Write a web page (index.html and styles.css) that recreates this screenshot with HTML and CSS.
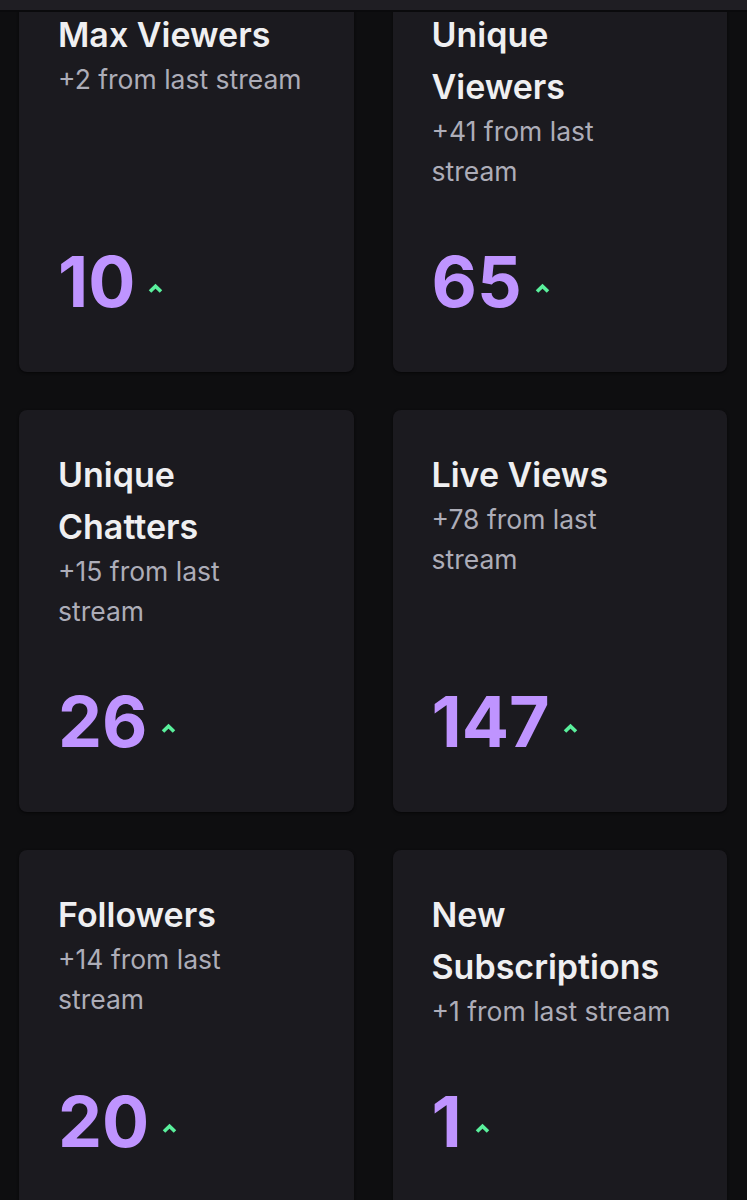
FILE: index.html
```html
<!DOCTYPE html>
<html lang="en">
<head>
    <meta charset="UTF-8">
    <meta name="viewport" content="width=device-width, initial-scale=1.0">
    <title>Stream Summary</title>
    <link rel="stylesheet" href="styles.css">
</head>
<body>
    <div id="topbar"></div>
    <div id="stats">
        <div class="card">
            <div class="title">Max Viewers</div>
            <div class="sub">+2 from last stream</div>
            <div class="value"><span>10</span><svg class="up" width="15" height="10" viewBox="0 0 15 10"><polyline points="2,8.5 7.5,3.2 13,8.5"/></svg></div>
        </div>
        <div class="card">
            <div class="title">Unique Viewers</div>
            <div class="sub">+41 from last stream</div>
            <div class="value"><span>65</span><svg class="up" width="15" height="10" viewBox="0 0 15 10"><polyline points="2,8.5 7.5,3.2 13,8.5"/></svg></div>
        </div>
        <div class="card">
            <div class="title">Unique Chatters</div>
            <div class="sub">+15 from last stream</div>
            <div class="value"><span>26</span><svg class="up" width="15" height="10" viewBox="0 0 15 10"><polyline points="2,8.5 7.5,3.2 13,8.5"/></svg></div>
        </div>
        <div class="card">
            <div class="title">Live Views</div>
            <div class="sub">+78 from last stream</div>
            <div class="value"><span>147</span><svg class="up" width="15" height="10" viewBox="0 0 15 10"><polyline points="2,8.5 7.5,3.2 13,8.5"/></svg></div>
        </div>
        <div class="card">
            <div class="title">Followers</div>
            <div class="sub">+14 from last stream</div>
            <div class="value"><span>20</span><svg class="up" width="15" height="10" viewBox="0 0 15 10"><polyline points="2,8.5 7.5,3.2 13,8.5"/></svg></div>
        </div>
        <div class="card">
            <div class="title">New Subscriptions</div>
            <div class="sub">+1 from last stream</div>
            <div class="value"><span>1</span><svg class="up" width="15" height="10" viewBox="0 0 15 10"><polyline points="2,8.5 7.5,3.2 13,8.5"/></svg></div>
        </div>
    </div>
</body>
</html>
```

FILE: styles.css
```css
body {
    font-family: Inter, "Noto Sans", sans-serif;
    margin: 0;
    background-color: #0e0e10;
    color: #efeff1;
}
#topbar {
    position: fixed;
    top: 0;
    left: 0;
    right: 0;
    height: 10px;
    background-color: #1f1e23;
    border-bottom: 2px solid #0a0a0c;
    z-index: 2;
}
#stats {
    display: grid;
    grid-template-columns: 1fr 1fr;
    column-gap: 39px;
    row-gap: 38px;
    padding: 0 20px 40px 19px;
    margin-top: -30px; /* first row is scrolled under the bar */
}
.card {
    display: flex;
    flex-direction: column;
    padding: 39px 45px 55px 39px;
    background-color: #1b1a1f;
    border-radius: 8px;
    box-shadow: 0 1px 3px rgba(0, 0, 0, 0.6);
}
.title {
    font-size: 34px;
    font-weight: 600;
    line-height: 52px;
}
.sub {
    font-size: 26.5px;
    line-height: 40px;
    color: #adadb8;
    margin-top: -2px;
}
.value {
    margin-top: auto;
    padding-top: 56px;
    display: flex;
    align-items: center;
    gap: 13px;
    font-size: 70px;
    font-weight: 700;
    line-height: 70px;
    color: #bf94ff;
}
.up {
    margin-top: 11px;
}
.up polyline {
    fill: none;
    stroke: #5af09c;
    stroke-width: 3.6;
}
```
